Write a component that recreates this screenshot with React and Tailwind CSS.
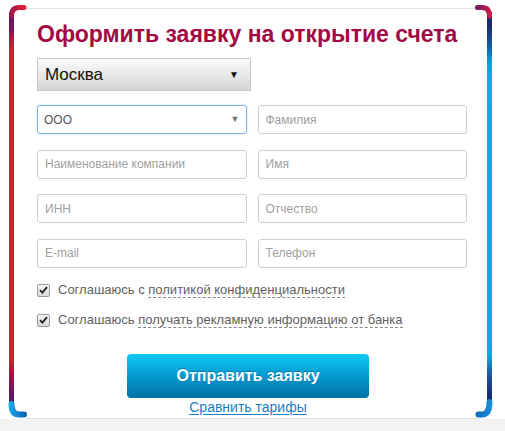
import React from 'react';

function Frame() {
  return (
    <svg className="absolute inset-0 pointer-events-none" width="505" height="431" viewBox="0 0 505 431">
      <defs>
        <linearGradient id="lbar" x1="0" y1="10" x2="0" y2="412" gradientUnits="userSpaceOnUse">
          <stop offset="0" stopColor="#b8163e" />
          <stop offset="0.02" stopColor="#62195f" />
          <stop offset="0.05" stopColor="#7d1856" />
          <stop offset="0.08" stopColor="#c41a3a" />
          <stop offset="0.11" stopColor="#d91d2d" />
          <stop offset="0.87" stopColor="#d91d2d" />
          <stop offset="0.91" stopColor="#a3104a" />
          <stop offset="0.96" stopColor="#5a1a66" />
          <stop offset="1" stopColor="#4b1a6c" />
        </linearGradient>
        <linearGradient id="rbar" x1="0" y1="10" x2="0" y2="410" gradientUnits="userSpaceOnUse">
          <stop offset="0" stopColor="#2a226a" />
          <stop offset="0.04" stopColor="#1b2b70" />
          <stop offset="0.08" stopColor="#15509a" />
          <stop offset="0.13" stopColor="#0a9be0" />
          <stop offset="0.17" stopColor="#0aaeea" />
          <stop offset="0.86" stopColor="#0aa8e6" />
          <stop offset="0.92" stopColor="#1a4c9a" />
          <stop offset="0.97" stopColor="#1a2a70" />
          <stop offset="1" stopColor="#1a3e8c" />
        </linearGradient>
        <linearGradient id="ltop" x1="9" y1="0" x2="26" y2="0" gradientUnits="userSpaceOnUse">
          <stop offset="0" stopColor="#9a1648" />
          <stop offset="1" stopColor="#e8213a" />
        </linearGradient>
        <linearGradient id="rtop" x1="475" y1="0" x2="492" y2="0" gradientUnits="userSpaceOnUse">
          <stop offset="0" stopColor="#641a5e" />
          <stop offset="1" stopColor="#da1f48" />
        </linearGradient>
        <linearGradient id="lbot" x1="9" y1="0" x2="27" y2="0" gradientUnits="userSpaceOnUse">
          <stop offset="0" stopColor="#1aaaea" />
          <stop offset="1" stopColor="#0d5cb0" />
        </linearGradient>
        <linearGradient id="rbot" x1="475" y1="0" x2="493" y2="0" gradientUnits="userSpaceOnUse">
          <stop offset="0" stopColor="#0d62b6" />
          <stop offset="1" stopColor="#1a96e0" />
        </linearGradient>
      </defs>
      <rect x="9" y="12" width="5" height="398" fill="url(#lbar)" />
      <path d="M11.5 16 Q11.5 7.5 19 7.5 L24 7.5" fill="none" stroke="url(#ltop)" strokeWidth="5" strokeLinecap="round" />
      <path d="M11.5 404 Q11.5 414.5 19 414.5 L24 414.5" fill="none" stroke="url(#lbot)" strokeWidth="6" strokeLinecap="round" />
      <rect x="487" y="12" width="5" height="396" fill="url(#rbar)" />
      <path d="M489.5 16 Q489.5 7.5 482 7.5 L477.5 7.5" fill="none" stroke="url(#rtop)" strokeWidth="5" strokeLinecap="round" />
      <path d="M489.5 402 Q489.5 414.5 482 414.5 L478.5 414.5" fill="none" stroke="url(#rbot)" strokeWidth="6" strokeLinecap="round" />
    </svg>
  );
}

function Field({ placeholder }) {
  return (
    <input
      type="text"
      placeholder={placeholder}
      className="h-[29px] w-full rounded-[3px] border border-[#cfcfcf] bg-white px-[7px] text-[12px] text-[#555] placeholder:text-[#a0a0a0] outline-none"
    />
  );
}

function Check({ children }) {
  return (
    <label className="flex h-[20px] items-center gap-[8px] text-[13px] leading-[20px] text-[#5f5f5f]">
      <span className="flex h-[13px] w-[13px] items-center justify-center rounded-[2px] border border-[#9a9a9a] bg-gradient-to-b from-[#f6f6f6] to-[#d9d9d9]">
        <svg width="9" height="8" viewBox="0 0 9 8">
          <path d="M1 4.2 L3.4 6.6 L8 1.2" fill="none" stroke="#222" strokeWidth="1.8" />
        </svg>
      </span>
      <span>{children}</span>
    </label>
  );
}

export default function App() {
  return (
    <div className="relative flex h-[431px] w-[505px] flex-col overflow-hidden bg-white [font-family:'Liberation_Sans',Arial,sans-serif]">
      <div className="h-[419px] shrink-0">
        <div className="mx-[26px] mt-[8px] h-[411px] border-y border-[#e3e3e3] pl-[11px] pt-[11px]">
          {/* Title */}
          <h1 className="whitespace-nowrap text-[23px] font-bold leading-[28px] text-[#a10a42]">
            Оформить заявку на открытие счета
          </h1>

          {/* City */}
          <div className="mt-[10px] flex h-[33px] w-[214px] items-center justify-between border border-[#c9c9c9] bg-gradient-to-b from-[#fcfcfc] to-[#d5d5d5] pl-[7px] pr-[11px]">
            <span className="text-[17px] text-[#111]">Москва</span>
            <span className="text-[10px] text-[#111]">▼</span>
          </div>

          {/* Fields */}
          <div className="mt-[14px] grid w-[430px] grid-cols-2 gap-x-[11px] gap-y-[15.5px]">
            <div className="flex h-[29px] items-center justify-between rounded-[3px] border border-[#86b8e3] bg-white pl-[6px] pr-[6px] shadow-[0_0_2px_rgba(102,175,233,0.5)]">
              <span className="text-[12px] text-[#555]">ООО</span>
              <span className="text-[9px] text-[#777]">▼</span>
            </div>
            <Field placeholder="Фамилия" />
            <Field placeholder="Наименование компании" />
            <Field placeholder="Имя" />
            <Field placeholder="ИНН" />
            <Field placeholder="Отчество" />
            <Field placeholder="E-mail" />
            <Field placeholder="Телефон" />
          </div>

          {/* Agreements */}
          <div className="mt-[12.5px] flex flex-col gap-[10px]">
            <Check>
              Соглашаюсь с <span className="border-b border-dashed border-[#8a8a8a]">политикой конфиденциальности</span>
            </Check>
            <Check>
              Соглашаюсь <span className="border-b border-dashed border-[#8a8a8a]">получать рекламную информацию от банка</span>
            </Check>
          </div>

          {/* Submit */}
          <div className="ml-[90px] mt-[24px] flex w-[242px] flex-col items-center">
            <button className="h-[44px] w-[242px] rounded-[4px] bg-gradient-to-b from-[#0fcaf6] via-[#0599cf] to-[#0073a6] text-[16px] font-bold text-white [text-shadow:0_-1px_0_rgba(0,60,100,0.4)]">
              Отправить заявку
            </button>
            <a href="#" className="mt-[1px] text-[14px] leading-[16px] text-[#1a7ec6] underline underline-offset-[2px]">
              Сравнить тарифы
            </a>
          </div>
        </div>
      </div>
      <div className="flex-1 bg-[#f3f3f3]" />
      <Frame />
    </div>
  );
}
